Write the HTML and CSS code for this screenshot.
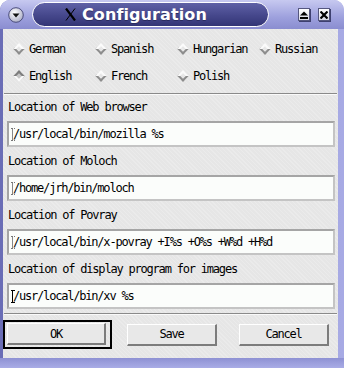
FILE: index.html
```html
<!DOCTYPE html>
<html lang="en">
<head>
<meta charset="UTF-8">
<title>Configuration</title>
<link rel="stylesheet" href="styles.css">
</head>
<body>

<div class="window">
	<div class="titlebar">
		<span class="menu-btn">
			<svg width="16" height="16" viewBox="0 0 16 16">
				<defs>
					<radialGradient id="knob" cx="0.4" cy="0.35" r="0.7">
						<stop offset="0" stop-color="#ffffff"/>
						<stop offset="1" stop-color="#a9abc4"/>
					</radialGradient>
				</defs>
				<circle cx="8" cy="8" r="7.3" fill="url(#knob)" stroke="#4b4d7c" stroke-width="1"/>
				<path d="M4.5 6.5 L11.5 6.5 L8 10.5 Z" fill="#111"/>
			</svg>
		</span>
		<div class="title-pill">
			<svg class="xlogo" width="11" height="13" viewBox="0 0 11 13">
				<path d="M1 0.5 L10 12.5" stroke="#000" stroke-width="2.2"/>
				<path d="M10 0.5 L1 12.5" stroke="#000" stroke-width="1"/>
			</svg>
			<span class="title-text">Configuration</span>
		</div>
		<span class="tb-btns">
			<span class="tb-btn">
				<svg width="8" height="8" viewBox="0 0 8 8">
					<path d="M0 4.5 L4 0.5 L8 4.5 Z" fill="#000"/>
					<rect x="0" y="6" width="8" height="2" fill="#000"/>
				</svg>
			</span>
			<span class="tb-btn">
				<svg width="8" height="8" viewBox="0 0 8 8">
					<path d="M0.5 0.5 L7.5 7.5 M7.5 0.5 L0.5 7.5" stroke="#000" stroke-width="2.2"/>
				</svg>
			</span>
		</span>
	</div>

	<div class="content">
		<div class="langs">
			<label class="lang"><span class="dia"></span>German</label>
			<label class="lang"><span class="dia"></span>Spanish</label>
			<label class="lang"><span class="dia"></span>Hungarian</label>
			<label class="lang"><span class="dia"></span>Russian</label>
			<label class="lang"><span class="dia on"></span>English</label>
			<label class="lang"><span class="dia"></span>French</label>
			<label class="lang"><span class="dia"></span>Polish</label>
		</div>
		<div class="sep"></div>

		<div class="fields">
			<div class="field">
				<p class="label">Location of Web browser</p>
				<div class="entry"><span class="caret"></span>/usr/local/bin/mozilla %s</div>
			</div>
			<div class="field">
				<p class="label">Location of Moloch</p>
				<div class="entry"><span class="caret"></span>/home/jrh/bin/moloch</div>
			</div>
			<div class="field">
				<p class="label">Location of Povray</p>
				<div class="entry"><span class="caret"></span>/usr/local/bin/x-povray +I%s +O%s +W%d +H%d</div>
			</div>
			<div class="field">
				<p class="label">Location of display program for images</p>
				<div class="entry"><span class="caret active"></span>/usr/local/bin/xv %s</div>
			</div>
		</div>
		<div class="sep sep2"></div>

		<div class="buttons">
			<div class="focus"><span class="btn btn-ok">OK</span></div>
			<span class="btn btn-save">Save</span>
			<span class="btn btn-cancel">Cancel</span>
		</div>
	</div>
	<div class="frame-bottom"></div>
</div>

</body>
</html>
```
FILE: styles.css
```css
*{ margin:0; padding:0; box-sizing:border-box}
body{
	width:344px;
	height:368px;
	overflow:hidden;
	background:#fff;
	font-family:"DejaVu Sans Mono", "Liberation Mono", monospace;
	font-size:12px;
	letter-spacing:-1.2px;
	color:#000;
}
.window{
	height:368px;
	background:linear-gradient(to right, #6a6db6 0, #6a6db6 3px, #8f92d6 3px, #a7aae4 100%);
	border-radius:10px 10px 0 0;
	display:flex;
	flex-direction:column;
}

/* title bar */
.titlebar{
	height:29px;
	display:flex;
	align-items:center;
	padding-left:8px;
	background:linear-gradient(#c7c9f0, #9da0dd 60%, #8a8dd0);
	border-radius:10px 10px 0 0;
}
.menu-btn{
	width:16px;
	height:16px;
	display:flex;
}
.title-pill{
	align-self:flex-start;
	margin:2px 0 0 8px;
	width:237px;
	height:25px;
	border:1.5px solid #fff;
	border-radius:13px;
	background:linear-gradient(#5f61a6, #45478b 55%, #333575);
	display:flex;
	align-items:center;
	padding-left:32px;
}
.xlogo{
	margin-right:6px;
}
.title-text{
	font-family:"DejaVu Sans", sans-serif;
	font-weight:bold;
	font-size:16px;
	letter-spacing:0.1px;
	color:#fff;
	text-shadow:0 1px 0 #2a2c60;
}
.tb-btns{
	display:flex;
	gap:8px;
	margin-left:29px;
}
.tb-btn{
	width:12px;
	height:13px;
	display:flex;
	align-items:center;
	justify-content:center;
	background:linear-gradient(#ffffff, #d6d7e4);
	border:1px solid #55577f;
	box-shadow:1px 1px 0 #3e4070;
}

/* content */
.content{
	margin:0 6px 0 3px;
	height:329px;
	background-color:#e6e6e6;
	background-image:repeating-linear-gradient(45deg, rgba(255,255,255,0.18) 0 1px, transparent 1px 3px);
}
.langs{
	display:grid;
	grid-template-columns:repeat(4, 82px);
	grid-auto-rows:27px;
	padding:6px 0 0 11px;
	height:60px;
}
.lang{
	display:flex;
	align-items:center;
}
.dia{
	width:8px;
	height:8px;
	margin:0 6px 0 1px;
	transform:rotate(45deg);
	border:2px solid;
	border-color:#fbfbfb #8d8d8d #8d8d8d #fbfbfb;
}
.dia.on{
	background:#c6c6c6;
	border-color:#7d7d7d #fafafa #fafafa #7d7d7d;
}
.sep{
	margin:4px 1px 0;
	border-top:1px solid #8a8a8a;
	border-bottom:1px solid #fafafa;
}
.fields{
	padding-top:6px;
}
.field{
	margin-top:8px;
}
.field:first-child{
	margin-top:0;
}
.label{
	height:13px;
	line-height:13px;
	padding-left:5px;
}
.entry{
	margin:7px 3px 0 4px;
	height:26px;
	display:flex;
	align-items:center;
	padding-left:2px;
	background:#fbfdfb;
	border:2px solid #a5a5a5;
	border-bottom-color:#c4c4c4;
	border-right-color:#c4c4c4;
}
.caret{
	width:4px;
	height:13px;
	margin-right:-2px;
	border-top:1px dotted #777;
	border-bottom:1px dotted #777;
	background:linear-gradient(to right, transparent 1px, #888 1px, #888 2px, transparent 2px);
}
.caret.active{
	border-top:1px solid #000;
	border-bottom:1px solid #000;
	background:linear-gradient(to right, transparent 1px, #000 1px, #000 2px, transparent 2px);
}
.sep2{
	margin-top:4px;
}

/* buttons */
.buttons{
	display:flex;
	align-items:center;
	margin-top:5px;
}
.focus{
	border:2px solid #000;
	padding:1px 4px 2px 2px;
}
.btn{
	display:flex;
	align-items:center;
	justify-content:center;
	height:22px;
	width:90px;
	background:#e8e8e8;
	border-style:solid;
	border-width:1px 2px 2px 1px;
	border-color:#ffffff #7c7c7c #7c7c7c #ffffff;
}
.btn-ok{
	width:99px;
}
.btn-save{
	margin-left:15px;
}
.btn-cancel{
	margin-left:22px;
}
.frame-bottom{
	flex:1;
	background:linear-gradient(#8e91d3, #a9ace6);
}
```
